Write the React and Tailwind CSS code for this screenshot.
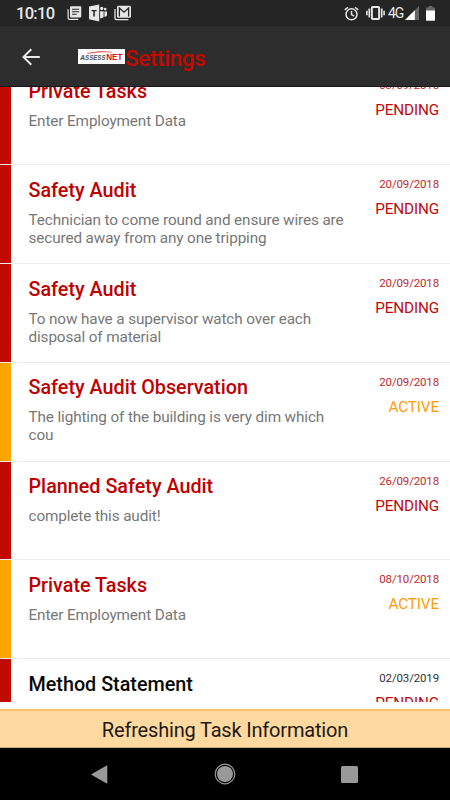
import React from "react";

const tasks = [
  { id: 1, title: "Private Tasks", text: "Enter Employment Data", date: "03/09/2018", status: "PENDING", overdue: true },
  {
    id: 2,
    title: "Safety Audit",
    text: "Technician to come round and ensure wires are secured away from any one tripping",
    date: "20/09/2018",
    status: "PENDING",
    overdue: true,
  },
  {
    id: 3,
    title: "Safety Audit",
    text: "To now have a supervisor watch over each disposal of material",
    date: "20/09/2018",
    status: "PENDING",
    overdue: true,
  },
  {
    id: 4,
    title: "Safety Audit Observation",
    text: "The lighting of the building is very dim which cou",
    date: "20/09/2018",
    status: "ACTIVE",
    overdue: true,
  },
  { id: 5, title: "Planned Safety Audit", text: "complete this audit!", date: "26/09/2018", status: "PENDING", overdue: true },
  { id: 6, title: "Private Tasks", text: "Enter Employment Data", date: "08/10/2018", status: "ACTIVE", overdue: true },
  { id: 7, title: "Method Statement", text: "", date: "02/03/2019", status: "PENDING", overdue: false },
];

function NewsIcon() {
  return (
    <svg width="15" height="16" viewBox="0 0 16 16" fill="none">
      <path d="M1.2 4v9.3c0 .8.6 1.4 1.4 1.4H12" stroke="#e6e6e6" strokeWidth="1.3" />
      <rect x="3.2" y="0.8" width="12" height="12" rx="1.2" fill="#e6e6e6" />
      <path d="M5.4 4h7.6M5.4 6.7h7.6M5.4 9.4h4.8" stroke="#252525" strokeWidth="1.1" />
    </svg>
  );
}

function TeamsIcon() {
  return (
    <svg width="18" height="18" viewBox="0 0 18 18" fill="#e6e6e6">
      <path d="M0 2.4 10.2.4v17L0 15.3z" />
      <path d="M2.6 5.9h5v1.3H5.8v5.4H4.3V7.2H2.6z" fill="#252525" />
      <circle cx="12.7" cy="4.4" r="1.7" />
      <circle cx="16.2" cy="5.1" r="1.3" />
      <path d="M11.1 7.2h3.5v5.4c0 1.2-1.5 1.9-3.5 1.6zM15.4 7.4H18v3.6c0 1.3-1.1 1.9-2.6 1.7z" />
    </svg>
  );
}

function GmailIcon() {
  return (
    <svg width="17" height="16" viewBox="0 0 17 16" fill="none">
      <path d="M1 4v9.3c0 .8.6 1.4 1.4 1.4h12" stroke="#e6e6e6" strokeWidth="1.3" />
      <rect x="3" y="0.8" width="14" height="12" rx="1.2" fill="#e6e6e6" />
      <path d="M5.4 11.4V3l4.6 4.2L14.6 3v8.4" stroke="#252525" strokeWidth="1.3" />
    </svg>
  );
}

function AlarmIcon() {
  return (
    <svg width="15" height="15" viewBox="0 0 15 15" fill="none" stroke="#e6e6e6" strokeWidth="1.5">
      <circle cx="7.5" cy="8.3" r="5.5" />
      <path d="M7.5 4.9v3.7l2.6 1.6M.8 3.9 4 1.2M14.2 3.9 11 1.2" />
    </svg>
  );
}

function VibrateIcon() {
  return (
    <svg width="19" height="14" viewBox="0 0 19 14" fill="none" stroke="#e6e6e6">
      <rect x="5.9" y="1" width="7.2" height="12" rx="0.8" strokeWidth="1.9" />
      <path d="M3.3 2.6v8.8M15.7 2.6v8.8" strokeWidth="1.7" />
      <path d="M.9 4.8v4.4M18.1 4.8v4.4" strokeWidth="1.6" />
    </svg>
  );
}

function SignalIcon() {
  return (
    <svg width="14" height="14" viewBox="0 0 14 14">
      <path d="M14 0v14H0z" fill="#666" />
      <path d="M9.8 4.2V14H0z" fill="#fff" />
    </svg>
  );
}

function BatteryIcon() {
  return (
    <svg width="9" height="15" viewBox="0 0 9 15">
      <path d="M2.6 0h3.8v1.4H9V5H0V1.4h2.6z" fill="#666" />
      <path d="M0 4.4h9v9.4c0 .6-.4 1-1 1H1c-.6 0-1-.4-1-1z" fill="#fff" />
    </svg>
  );
}

function Logo() {
  return (
    <svg width="47" height="15" viewBox="0 0 47 15">
      <rect width="47" height="15" fill="#fff" />
      <path d="M9 4.6C17 2.4 26 2.1 34 3.2 26 2.8 18 3.1 9 4.6z" fill="#d8232a" stroke="#d8232a" strokeWidth="0.3" />
      <g fontFamily="Liberation Sans, sans-serif" fontWeight="700">
        <text x="2" y="10.7" fontSize="8" fontStyle="italic" fill="#4a525c" textLength="25.5" lengthAdjust="spacingAndGlyphs">
          A<tspan fontSize="7">SSESS</tspan>
        </text>
        <text x="28.2" y="10.7" fontSize="8.8" fill="#d4141c" textLength="16.3" lengthAdjust="spacingAndGlyphs">
          NET
        </text>
      </g>
    </svg>
  );
}

function StatusBar() {
  return (
    <div className="flex h-[26px] items-center justify-between bg-[#252525] pl-4 pr-[15px]">
      <div className="flex items-center">
        <span className="w-[51px] pt-[2px] text-[16.5px] font-medium leading-[24px] tracking-[-0.7px] text-[#e8e8e8]">10:10</span>
        <NewsIcon />
        <div className="ml-[7px]">
          <TeamsIcon />
        </div>
        <div className="ml-[7px]">
          <GmailIcon />
        </div>
      </div>
      <div className="-ml-px flex items-center">
        <AlarmIcon />
        <div className="ml-[7px]">
          <VibrateIcon />
        </div>
        <span className="ml-[3px] w-[16px] text-[14px] leading-[26px] tracking-[-1.2px] text-[#e8e8e8]">4G</span>
        <div className="ml-px">
          <SignalIcon />
        </div>
        <div className="ml-[7px]">
          <BatteryIcon />
        </div>
      </div>
    </div>
  );
}

function Header() {
  return (
    <div className="flex h-[61px] items-center border-b border-[#151515] bg-[#2d2d2d] pl-[22px] pt-px">
      <svg width="18" height="18" viewBox="0 0 18 18" fill="none" stroke="#e8e8e8" strokeWidth="2">
        <path d="M17.8 9H1.6M9.3 1.2 1.5 9l7.8 7.8" />
      </svg>
      <div className="ml-[38px]">
        <Logo />
      </div>
      <h1 className="pt-[2px] text-[22.4px] font-medium leading-7 tracking-[-0.3px] text-[#c00a00]">Settings</h1>
    </div>
  );
}

function TaskRow({ task }) {
  const active = task.status === "ACTIVE";
  return (
    <div className="flex h-[98.8px] shrink-0 border-b border-[#ececec]">
      <div className={active ? "w-[11px] bg-[#ffa500]" : "w-[11px] bg-[#c10b00]"} />
      <div className="flex-1 pl-[17.5px] pt-[13.5px]">
        <h2 className={`text-[19.75px] font-medium leading-6 ${task.overdue ? "text-[#be0000]" : "text-[#0a0a0a]"}`}>
          {task.title}
        </h2>
        <p className="mt-2 w-[322px] text-[15.3px] leading-[18px] tracking-[-0.12px] text-[#777]">{task.text}</p>
      </div>
      <div className="pr-[11px] pt-3 text-right">
        <div
          className={`text-[11.5px] leading-[14px] tracking-[-0.15px] ${task.overdue ? "text-[#c32a2a]" : "text-[#333]"}`}
        >
          {task.date}
        </div>
        <div
          className={`mt-[9px] text-[15.3px] leading-[18px] tracking-[-0.15px] ${active ? "text-[#ff9d0a]" : "text-[#c00a0a]"}`}
        >
          {task.status}
        </div>
      </div>
    </div>
  );
}

function NavBar() {
  return (
    <div className="flex h-[52px] items-center bg-black pl-[91px]">
      <svg width="17" height="19" viewBox="0 0 17 19" fill="#999">
        <path d="M15.2.7c.6-.4 1.1-.1 1.1.6v16.4c0 .7-.5 1-1.1.6L.8 10.1c-.6-.4-.6-.9 0-1.2z" />
      </svg>
      <svg className="ml-[106px]" width="22" height="22" viewBox="0 0 22 22">
        <circle cx="11" cy="11" r="9.8" fill="none" stroke="#999" strokeWidth="1.2" />
        <circle cx="11" cy="11" r="8" fill="#999" />
      </svg>
      <div className="ml-[105px] h-[17px] w-[17px] rounded-[1.5px] bg-[#999]" />
    </div>
  );
}

function App() {
  return (
    <div className="flex h-[800px] w-[450px] flex-col overflow-hidden bg-white font-['Roboto',sans-serif]">
      <StatusBar />
      <Header />
      <div className="h-[615px] overflow-hidden">
        <div className="-mt-[20.6px] flex flex-col">
          {tasks.map((task) => (
            <TaskRow key={task.id} task={task} />
          ))}
        </div>
      </div>
      <div className="mt-[7px] h-[39px] border-b border-t-2 border-b-[#c9a878] border-t-[#ffc06a] bg-[#ffd9a0] pt-px text-center text-[20px] leading-[37px] tracking-[-0.18px] text-[#1c1a16]">
        Refreshing Task Information
      </div>
      <NavBar />
    </div>
  );
}

export default App;
